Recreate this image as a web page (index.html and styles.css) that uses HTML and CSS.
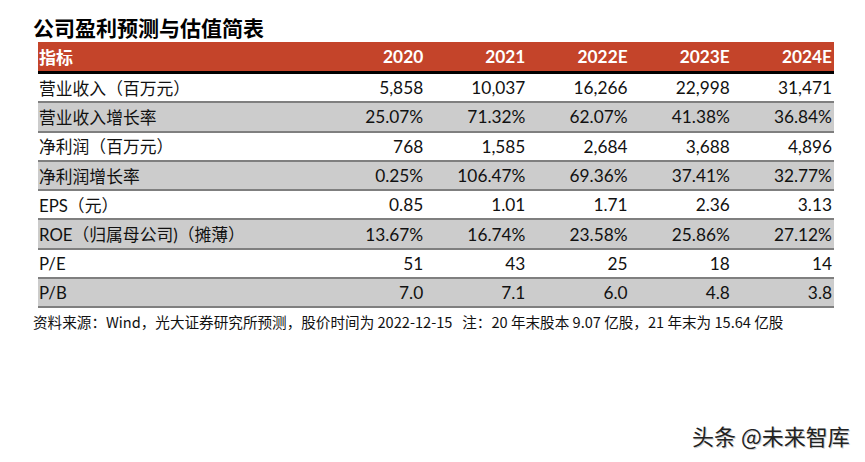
FILE: index.html
```html
<!DOCTYPE html>
<html lang="zh-CN">
<head>
<meta charset="utf-8">
<title>公司盈利预测与估值简表</title>
<link rel="stylesheet" href="styles.css">
</head>
<body>
<div class="page">
  <h1 class="title">公司盈利预测与估值简表</h1>
  <div class="table">
    <div class="row head">
      <div class="label">指标</div>
      <div class="num">2020</div>
      <div class="num">2021</div>
      <div class="num">2022E</div>
      <div class="num">2023E</div>
      <div class="num">2024E</div>
    </div>
    <div class="row">
      <div class="label">营业收入（百万元）</div>
      <div class="num">5,858</div>
      <div class="num">10,037</div>
      <div class="num">16,266</div>
      <div class="num">22,998</div>
      <div class="num">31,471</div>
    </div>
    <div class="row alt">
      <div class="label">营业收入增长率</div>
      <div class="num">25.07%</div>
      <div class="num">71.32%</div>
      <div class="num">62.07%</div>
      <div class="num">41.38%</div>
      <div class="num">36.84%</div>
    </div>
    <div class="row">
      <div class="label">净利润（百万元）</div>
      <div class="num">768</div>
      <div class="num">1,585</div>
      <div class="num">2,684</div>
      <div class="num">3,688</div>
      <div class="num">4,896</div>
    </div>
    <div class="row alt">
      <div class="label">净利润增长率</div>
      <div class="num">0.25%</div>
      <div class="num">106.47%</div>
      <div class="num">69.36%</div>
      <div class="num">37.41%</div>
      <div class="num">32.77%</div>
    </div>
    <div class="row">
      <div class="label">EPS（元）</div>
      <div class="num">0.85</div>
      <div class="num">1.01</div>
      <div class="num">1.71</div>
      <div class="num">2.36</div>
      <div class="num">3.13</div>
    </div>
    <div class="row alt">
      <div class="label">ROE（归属母公司)（摊薄）</div>
      <div class="num">13.67%</div>
      <div class="num">16.74%</div>
      <div class="num">23.58%</div>
      <div class="num">25.86%</div>
      <div class="num">27.12%</div>
    </div>
    <div class="row">
      <div class="label">P/E</div>
      <div class="num">51</div>
      <div class="num">43</div>
      <div class="num">25</div>
      <div class="num">18</div>
      <div class="num">14</div>
    </div>
    <div class="row alt">
      <div class="label">P/B</div>
      <div class="num">7.0</div>
      <div class="num">7.1</div>
      <div class="num">6.0</div>
      <div class="num">4.8</div>
      <div class="num">3.8</div>
    </div>
  </div>
  <p class="note">资料来源：Wind，光大证券研究所预测，股价时间为 2022-12-15&nbsp;&nbsp;&nbsp;注：20 年末股本 9.07 亿股，21 年末为 15.64 亿股</p>
  <div class="watermark">头条 @未来智库</div>
</div>
</body>
</html>
```

FILE: styles.css
```css
html, body {
  margin: 0;
  padding: 0;
  background: #ffffff;
}

.page {
  position: relative;
  width: 865px;
  height: 462px;
  padding: 14px 0 0 33px;
  box-sizing: border-box;
  font-family: Lato, "Noto Sans CJK SC", sans-serif;
  color: #111111;
}

.title {
  margin: 0 0 2px 0;
  height: 26px;
  line-height: 26px;
  font-family: "Noto Sans CJK SC", sans-serif;
  font-size: 21px;
  font-weight: 700;
  color: #000000;
}

.table {
  width: 796px;
  margin-left: 5px;
}

.row {
  display: grid;
  grid-template-columns: 285px repeat(5, 1fr);
  align-items: center;
  height: 27.3px;
  border-bottom: 2px solid #7f7f7f;
  font-size: 17.3px;
}

.row.alt {
  background: #cccccc;
}

.row.head {
  height: 29px;
  background: #c4442a;
  color: #ffffff;
  font-weight: 700;
  border-bottom: 3px solid #000000;
}

.label {
  padding-left: 1px;
  font-size: 16.8px;
  white-space: nowrap;
}

.head .label {
  font-size: 17px;
}

.num {
  text-align: right;
  padding-right: 2px;
}

.note {
  margin: 4px 0 0 0;
  line-height: 20px;
  font-family: "Noto Sans CJK SC", sans-serif;
  font-size: 14.6px;
  color: #111111;
  white-space: nowrap;
}

.watermark {
  position: absolute;
  left: 692px;
  top: 422px;
  font-family: "Noto Sans CJK SC", sans-serif;
  font-size: 22px;
  font-weight: 400;
  line-height: 26px;
  color: #222222;
  text-shadow: 1px 1px 0 #d0d0d0, -1px 0 0 #ffffff;
  white-space: nowrap;
}
```
